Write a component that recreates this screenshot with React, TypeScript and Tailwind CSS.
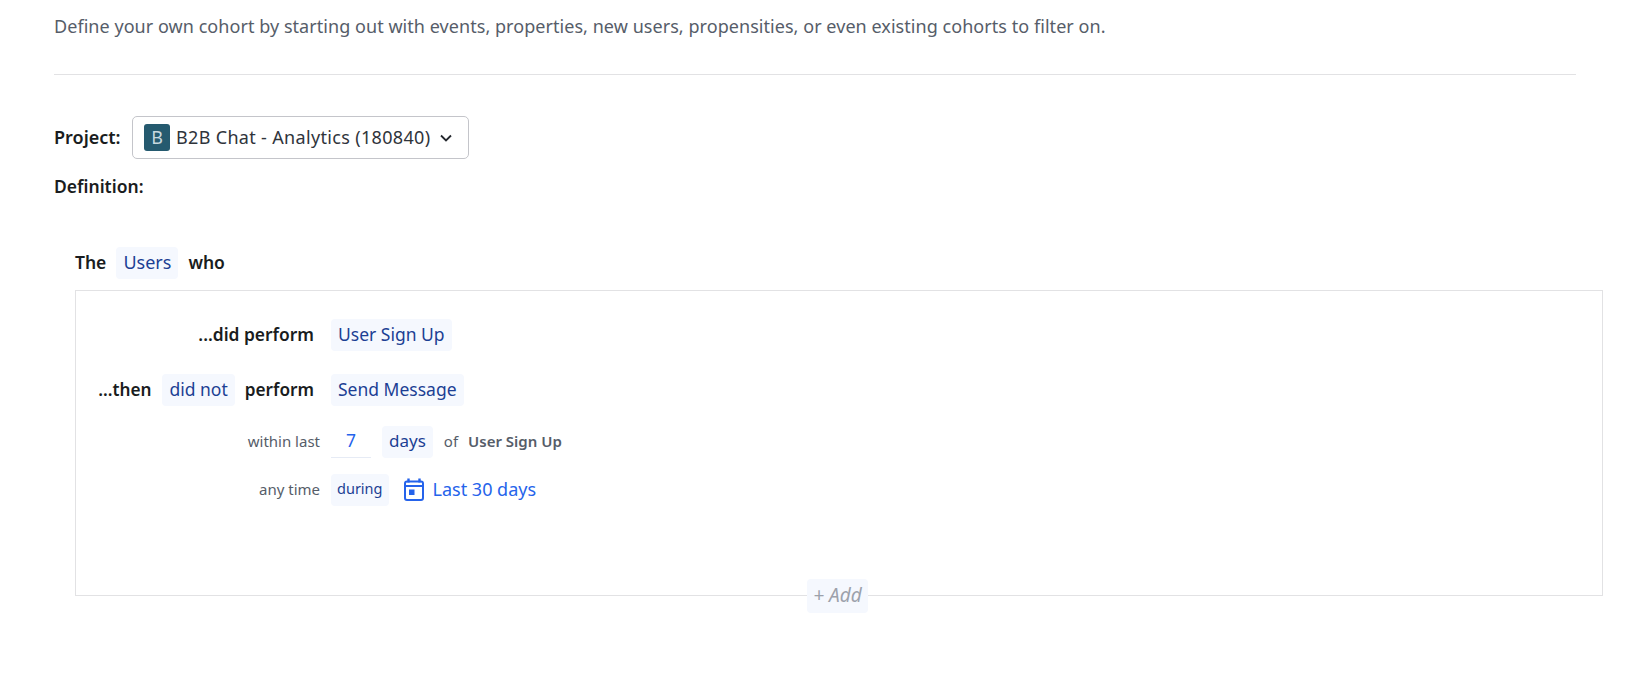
const Pill = ({ children, className = 'px-[7px]' }: { children: React.ReactNode; className?: string }) => (
  <span className={`inline-flex h-8 items-center rounded-sm bg-[#f5f8fe] pb-[2px] text-[#1c3f94] ${className}`}>
    {children}
  </span>
);

function CalendarIcon() {
  return (
    <svg width="22" height="24" viewBox="0 0 22 24" fill="none" className="text-[#2563eb]">
      <path d="M5.5 0.5v4M16.5 0.5v4" stroke="currentColor" strokeWidth="2.4" />
      <rect x="2" y="3.5" width="18" height="18.5" rx="2" stroke="currentColor" strokeWidth="2" />
      <path d="M2 8h18" stroke="currentColor" strokeWidth="2" />
      <rect x="6" y="11.5" width="5.5" height="5.5" fill="currentColor" />
    </svg>
  );
}

export default function App() {
  return (
    <div className="h-[674px] overflow-hidden bg-white pl-[54px] pr-[39px] font-['Noto_Sans',sans-serif] text-[18px] text-[#191c20]">
      <p className="flex h-[52px] items-center whitespace-nowrap tracking-[0.05px] text-[#565d69]">
        Define your own cohort by starting out with events, properties, new users, propensities, or even existing cohorts to filter on.
      </p>
      <div className="mr-[27px] mt-[22px] border-t border-[#e2e2e4]" />

      <div className="mt-[41px] flex items-center">
        <span className="w-[78px] font-semibold">Project:</span>
        <button className="flex h-[43px] w-[337px] items-center rounded-[5px] border border-[#c4c5ca] pl-[11px] text-[#2f343b]">
          <span className="flex h-[27px] w-[26px] items-center justify-center rounded-[3px] bg-[#255a6f] text-[#c8d8de]">B</span>
          <span className="ml-[6px] whitespace-nowrap tracking-[0.33px]">B2B Chat - Analytics (180840)</span>
          <svg width="14" height="14" viewBox="0 0 14 14" fill="none" className="ml-[9px]">
            <path d="M2 4.5l5 5 5-5" stroke="#24282e" strokeWidth="1.8" />
          </svg>
        </button>
      </div>

      <div className="mt-[16px] flex h-[22px] items-center text-[17.5px] font-semibold">Definition:</div>

      <div className="ml-[21px] mt-[50px]">
        <div className="flex h-8 items-center text-[17.5px] font-semibold">
          <span className="pb-[2px]">The</span>
          <Pill className="mx-[10px] px-[7px] text-[18px] font-normal">Users</Pill>
          <span className="pb-[2px]">who</span>
        </div>

        <div className="relative mt-[11px] h-[306px] border border-[#e2e2e4] pt-7 text-[17.5px]">
          <div className="flex items-center">
            <div className="w-[238px] pb-[1px] text-right text-[17.4px] font-semibold">...did perform</div>
            <Pill className="ml-[17px] px-[7px]">User Sign Up</Pill>
          </div>

          <div className="mt-[23px] flex items-center">
            <div className="flex w-[238px] items-center justify-end text-[17.2px] font-semibold">
              <span className="pb-[1px]">...then</span>
              <Pill className="ml-[11px] mr-[10px] px-[7px] text-[17.5px] font-normal">did not</Pill>
              <span className="pb-[1px]">perform</span>
            </div>
            <Pill className="ml-[17px] px-[7px]">Send Message</Pill>
          </div>

          <div className="mt-5 flex items-center text-[15px] text-[#565d69]">
            <div className="w-[244px] pb-[2px] text-right">within last</div>
            <span className="ml-[11px] flex h-8 w-10 items-center justify-center border-b border-[#e6ebf5] pb-[2px] text-[17.5px] text-[#2563eb]">7</span>
            <Pill className="ml-[11px] px-[7px] text-[17px]">days</Pill>
            <span className="ml-[11px] pb-[2px]">of</span>
            <span className="ml-[10px] pb-[2px] font-semibold">User Sign Up</span>
          </div>

          <div className="mt-4 flex items-center text-[14.5px] text-[#565d69]">
            <div className="w-[244px] pb-[2px] text-right text-[15px]">any time</div>
            <Pill className="ml-[11px] px-[6px]">during</Pill>
            <span className="ml-[14px] flex items-center gap-[8px] text-[18px] text-[#2563eb]">
              <CalendarIcon />
              <span className="pb-[2px]">Last 30 days</span>
            </span>
          </div>

          <span className="absolute left-[731px] top-[288px] flex h-[34px] w-[61px] items-center justify-center rounded-sm bg-[#f5f8fe] pb-[2px] text-[19px] italic text-[#9ca1ab]">
            + Add
          </span>
        </div>
      </div>
    </div>
  );
}
